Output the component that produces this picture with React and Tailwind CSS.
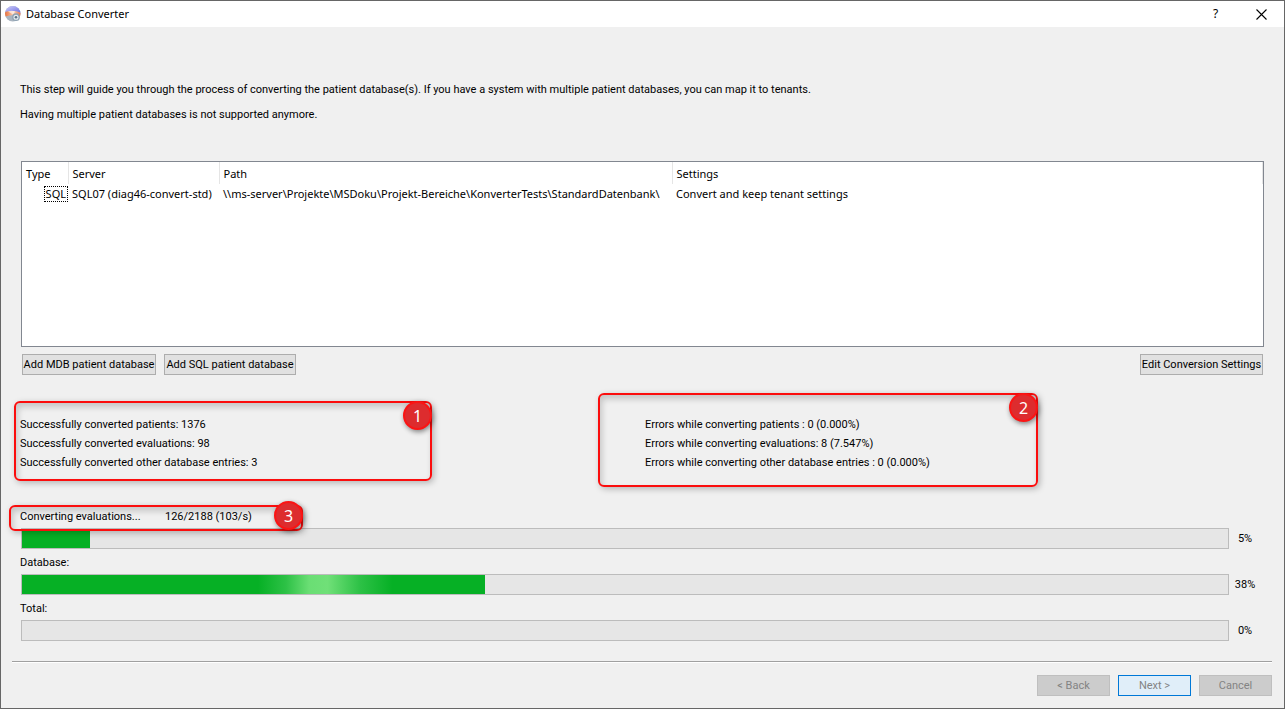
import clsx from 'clsx';

const databases = [
  {
    type: 'SQL',
    server: 'SQL07 (diag46-convert-std)',
    path: '\\\\ms-server\\Projekte\\MSDoku\\Projekt-Bereiche\\KonverterTests\\StandardDatenbank\\',
    settings: 'Convert and keep tenant settings',
  },
];

const converted = [
  'Successfully converted patients: 1376',
  'Successfully converted evaluations: 98',
  'Successfully converted other database entries: 3',
];

const errors = [
  'Errors while converting patients : 0 (0.000%)',
  'Errors while converting evaluations: 8 (7.547%)',
  'Errors while converting other database entries : 0 (0.000%)',
];

const AppIcon = () => (
  <svg viewBox="0 0 16 16" className="h-4 w-4 shrink-0" aria-hidden="true">
    <defs>
      <linearGradient id="discTop" x1="0" y1="0" x2="1" y2="1">
        <stop offset="0" stopColor="#d0d0fa" />
        <stop offset="1" stopColor="#6a6ae0" />
      </linearGradient>
      <linearGradient id="discMid" x1="0" y1="0" x2="1" y2="0">
        <stop offset="0" stopColor="#e8703c" />
        <stop offset="0.55" stopColor="#fbd0b4" />
        <stop offset="1" stopColor="#e06a48" />
      </linearGradient>
      <clipPath id="disc">
        <circle cx="7.8" cy="7.8" r="7.7" />
      </clipPath>
    </defs>
    <g clipPath="url(#disc)">
      <rect width="16" height="16" fill="#a9b4c0" />
      <path d="M0 0h16v7C12 4.5 5 4.5 0 6z" fill="url(#discTop)" />
      <path d="M0 6C5 4.6 11 4.6 16 7v3.5C11 8.5 6 9.5 0 10.5z" fill="url(#discMid)" />
      <path d="M3 5.6C5.5 4.4 8 4.4 10 5.4L8 8.4z" fill="#fff" opacity="0.6" />
    </g>
    <circle cx="11" cy="11.2" r="3.2" fill="#e6ecf1" stroke="#8fa2b2" strokeWidth="1.3" />
    <circle cx="11" cy="11.2" r="1.3" fill="#5f7486" />
  </svg>
);

// Numbered red frame laid over a part of the dialog
const Callout = ({ number, className, badgeClassName }) => (
  <div
    className={clsx(
      'pointer-events-none absolute rounded-md border-2 border-[#fb0d0d] shadow-[2px_2px_6px_rgba(0,0,0,0.25),inset_2px_4px_6px_rgba(0,0,0,0.18)]',
      className
    )}
  >
    <span
      className={clsx(
        'absolute flex h-[29px] w-[29px] items-center justify-center rounded-full border-2 border-[#fb1414] bg-[#dd2c2e] font-["Noto_Sans",sans-serif] text-base text-white shadow-[1px_2px_5px_rgba(0,0,0,0.45)]',
        badgeClassName
      )}
    >
      {number}
    </span>
  </div>
);

const Progress = ({ label, value, fill, glow }) => (
  <div className="ml-px mr-1 mt-[2px] flex items-center">
    <div
      role="progressbar"
      aria-label={label}
      aria-valuenow={value}
      aria-valuemin={0}
      aria-valuemax={100}
      className="h-[21px] flex-1 border border-[#bcbcbc] bg-[#e6e6e6]"
    >
      <div
        className={clsx(
          'h-full',
          glow ? 'bg-[linear-gradient(90deg,#06b025_51%,#2dc146_57%,#6ade74_62%,#70e078_66%,#2dc146_73%,#06b025_80%)]' : 'bg-[#06b025]'
        )}
        style={{ width: `${fill}%` }}
      />
    </div>
    <span className="w-8 pt-px text-center">{value}%</span>
  </div>
);

const SmallButton = ({ className, children }) => (
  <button
    type="button"
    className={clsx('h-[21px] whitespace-nowrap border border-[#adadad] bg-[#e1e1e1] pt-px text-center', className)}
  >
    {children}
  </button>
);

const WizardButton = ({ className, children }) => (
  <button type="button" disabled className={clsx('h-[21px] w-[73px] border pt-px', className)}>
    {children}
  </button>
);

const App = () => {
  return (
    <div className="flex min-h-screen flex-col border border-[#666] bg-[#f0f0f0] font-[Roboto,'Liberation_Sans',sans-serif] text-[11px] leading-[18px] text-black">
      <header className="flex h-[26px] items-center bg-white pl-1 font-['Noto_Sans',sans-serif]">
        <AppIcon />
        <h1 className="ml-[5px] flex-1">Database Converter</h1>
        <button type="button" aria-label="Help" className="flex h-full w-[45px] items-center justify-center text-xs">
          ?
        </button>
        <button type="button" aria-label="Close" className="flex h-full w-[46px] items-center justify-center">
          <svg viewBox="0 0 11 11" className="h-[11px] w-[11px]" stroke="#000" strokeWidth="1.1">
            <path d="M0.5 0.5l10 10M10.5 0.5l-10 10" />
          </svg>
        </button>
      </header>

      <main className="flex flex-1 flex-col px-[19px] pt-[54px]">
        <p>
          This step will guide you through the process of converting the patient database(s). If you have a system with
          multiple patient databases, you can map it to tenants.
        </p>
        <p className="mt-[7px]">Having multiple patient databases is not supported anymore.</p>

        <div className="mx-px mt-[37px] min-h-[120px] flex-1 border border-[#828790] bg-white">
          <table className="w-full table-fixed border-collapse text-left font-['Noto_Sans',sans-serif]">
            <colgroup>
              <col className="w-[46px]" />
              <col className="w-[151px]" />
              <col className="w-[453px]" />
              <col />
            </colgroup>
            <thead>
              <tr className="h-[22px]">
                {['Type', 'Server', 'Path', 'Settings'].map(name => (
                  <th key={name} className="border-r border-[#e5e5e5] p-0 pl-1 pt-px font-normal">{name}</th>
                ))}
              </tr>
            </thead>
            <tbody>
              {databases.map(db => (
                <tr key={db.path} className="h-5 whitespace-nowrap">
                  <td className="p-0 text-right">
                    <span className="inline-block border border-dotted border-black px-px leading-[14px]">{db.type}</span>
                  </td>
                  <td className="p-0 pl-1">{db.server}</td>
                  <td className="p-0 pl-1">{db.path}</td>
                  <td className="p-0 pl-1">{db.settings}</td>
                </tr>
              ))}
            </tbody>
          </table>
        </div>

        <div className="mt-[7px] flex gap-2 px-[2px]">
          <SmallButton className="w-[134px]">Add MDB patient database</SmallButton>
          <SmallButton className="w-[132px]">Add SQL patient database</SmallButton>
          <SmallButton className="ml-auto w-[123px]">Edit Conversion Settings</SmallButton>
        </div>

        <div className="mt-10 grid grid-cols-2 gap-x-[5px] leading-[19px]">
          <div className="relative">
            {converted.map(line => (
              <p key={line}>{line}</p>
            ))}
            <Callout number={1} className="-left-[6px] -top-[14px] h-20 w-[418px]" badgeClassName="-right-[2px] -top-[2px]" />
          </div>
          <div className="relative">
            {errors.map(line => (
              <p key={line}>{line}</p>
            ))}
            <Callout number={2} className="-left-[47px] -top-[22px] h-[94px] w-[440px]" badgeClassName="-right-[2px] -top-[2px]" />
          </div>
        </div>

        <div className="relative mt-9 flex">
          <span className="w-[145px]">Converting evaluations...</span>
          <span>126/2188 (103/s)</span>
          <Callout number={3} className="-left-[11px] -top-[3px] h-[26px] w-[294px]" badgeClassName="-right-[2px] -top-[6px]" />
        </div>
        <Progress label="Current step" value={5} fill={5.6} />
        <p className="mt-[5px]">Database:</p>
        <Progress label="Database" value={38} fill={38.4} glow />
        <p className="mt-[5px]">Total:</p>
        <Progress label="Total" value={0} fill={0} />
      </main>

      <footer className="ml-[11px] mr-3 mt-5 border-t border-[#a0a0a0]">
        <div className="flex justify-end gap-2 border-t border-white py-3 text-[#838383]">
          <WizardButton className="border-[#bfbfbf] bg-[#ccc]">&lt; Back</WizardButton>
          <WizardButton className="border-[#0078d7] bg-[#e0eef9]">Next &gt;</WizardButton>
          <WizardButton className="border-[#bfbfbf] bg-[#ccc]">Cancel</WizardButton>
        </div>
      </footer>
    </div>
  );
};

export default App;
